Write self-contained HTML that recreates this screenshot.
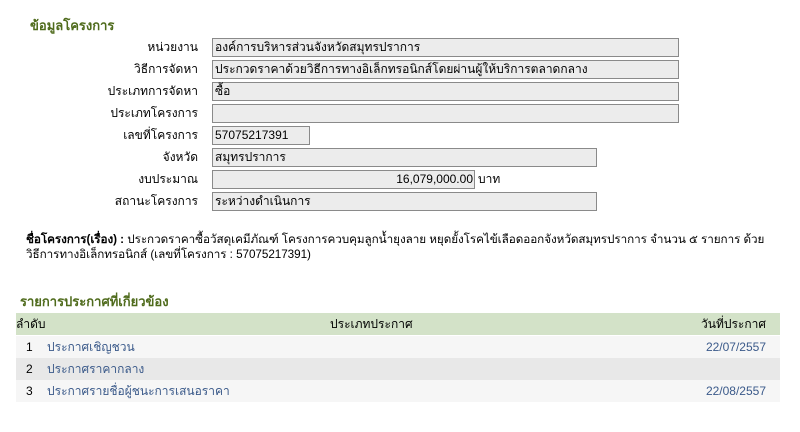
<!DOCTYPE html>
<html><head><meta charset="utf-8"><style>
body{margin:0;width:800px;height:432px;background:#fff;font-family:Tahoma,"Liberation Sans","Noto Sans CJK SC","WenQuanYi Zen Hei",sans-serif;font-size:12px;color:#000;position:relative;overflow:hidden}
.a{position:absolute;white-space:nowrap}
.lab{position:absolute;right:602px;text-align:right;line-height:19px}
.in{position:absolute;left:212px;height:17px;line-height:17px;background:#ececec;border:1px solid #8a8a8a;padding-left:2px;box-sizing:content-box}
h1{position:absolute;margin:0;font-size:13px;font-weight:bold;color:#4f6b1c}
.row{position:absolute;left:16px;width:764px;height:22px;line-height:22px}
.lnk{color:#3b5a8a}
</style></head><body>
<h1 style="left:30px;top:15px">ข้อมูลโครงการ</h1>
<div class="lab" style="top:38px">หน่วยงาน</div><div class="in" style="top:38px;width:463px">องค์การบริหารส่วนจังหวัดสมุทรปราการ</div>
<div class="lab" style="top:60px">วิธีการจัดหา</div><div class="in" style="top:60px;width:463px">ประกวดราคาด้วยวิธีการทางอิเล็กทรอนิกส์โดยผ่านผู้ให้บริการตลาดกลาง</div>
<div class="lab" style="top:82px">ประเภทการจัดหา</div><div class="in" style="top:82px;width:463px">ซื้อ</div>
<div class="lab" style="top:104px">ประเภทโครงการ</div><div class="in" style="top:104px;width:463px"></div>
<div class="lab" style="top:126px">เลขที่โครงการ</div><div class="in" style="top:126px;width:94px">57075217391</div>
<div class="lab" style="top:148px">จังหวัด</div><div class="in" style="top:148px;width:381px">สมุทรปราการ</div>
<div class="lab" style="top:170px">งบประมาณ</div><div class="in" style="top:170px;width:258px;text-align:right;padding-right:1px">16,079,000.00</div><div class="a" style="left:478px;top:171px;line-height:17px">บาท</div>
<div class="lab" style="top:192px">สถานะโครงการ</div><div class="in" style="top:192px;width:381px">ระหว่างดำเนินการ</div>
<div class="a" style="left:26px;top:232px;line-height:15px;font-size:11.7px;letter-spacing:-0.05px"><b>ชื่อโครงการ(เรื่อง) :</b> ประกวดราคาซื้อวัสดุเคมีภัณฑ์ โครงการควบคุมลูกน้ำยุงลาย หยุดยั้งโรคไข้เลือดออกจังหวัดสมุทรปราการ จำนวน ๕ รายการ ด้วย<br>วิธีการทางอิเล็กทรอนิกส์ (เลขที่โครงการ : 57075217391)</div>
<h1 style="left:20px;top:291px">รายการประกาศที่เกี่ยวข้อง</h1>
<div class="row" style="top:313px;background:#d3e2c8"><span class="a" style="left:0">ลำดับ</span><span class="a" style="left:314px">ประเภทประกาศ</span><span class="a" style="right:14px">วันที่ประกาศ</span></div>
<div class="row" style="top:336px;background:#f6f6f6"><span class="a" style="left:10px">1</span><span class="a lnk" style="left:31px">ประกาศเชิญชวน</span><span class="a lnk" style="right:14px">22/07/2557</span></div>
<div class="row" style="top:358px;background:#e8e8e8"><span class="a" style="left:10px">2</span><span class="a lnk" style="left:31px">ประกาศราคากลาง</span></div>
<div class="row" style="top:380px;background:#f6f6f6"><span class="a" style="left:10px">3</span><span class="a lnk" style="left:31px">ประกาศรายชื่อผู้ชนะการเสนอราคา</span><span class="a lnk" style="right:14px">22/08/2557</span></div>
</body></html>
